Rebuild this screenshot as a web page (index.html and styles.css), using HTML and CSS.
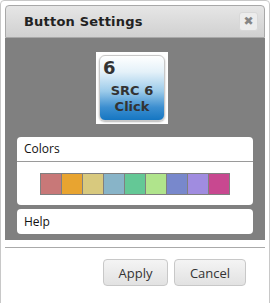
FILE: index.html
```html
<!DOCTYPE html>
<html lang="en">
<head>
  <meta charset="UTF-8" />
  <title>Button Settings</title>
  <link rel="stylesheet" href="styles.css">
</head>
<body>
  <div class="dialog">
    <div class="titlebar">
      <span class="title">Button Settings</span>
      <button class="close-btn" title="Close">&#x2716;</button>
    </div>

    <div class="content">
      <div class="preview">
        <div class="key">
          <span class="key-num">6</span>
          <span class="key-label">SRC 6<br>Click</span>
        </div>
      </div>

      <div class="panel">
        <div class="panel-head">Colors</div>
        <div class="swatches">
          <span class="swatch" style="background:#c87878"></span>
          <span class="swatch" style="background:#e8a430"></span>
          <span class="swatch" style="background:#d8c97e"></span>
          <span class="swatch" style="background:#88b4c8"></span>
          <span class="swatch" style="background:#64c896"></span>
          <span class="swatch" style="background:#b0e48c"></span>
          <span class="swatch" style="background:#7888cc"></span>
          <span class="swatch" style="background:#a08ce0"></span>
          <span class="swatch" style="background:#c84890"></span>
        </div>
      </div>

      <div class="panel">
        <div class="panel-head help">Help</div>
      </div>
    </div>

    <div class="footer">
      <button class="btn">Apply</button>
      <button class="btn">Cancel</button>
    </div>
  </div>
</body>
</html>
```

FILE: styles.css
```css
body {
  margin: 0;
  font-family: 'Open Sans', 'DejaVu Sans', sans-serif;
  background: #fff;
}
.dialog {
  width: 270px;
  height: 310px;
  box-sizing: border-box;
  border: 1px solid #c8c8c8;
  border-radius: 4px;
  padding: 4px;
  background: #fff;
}
.titlebar {
  height: 33px;
  box-sizing: border-box;
  display: flex;
  align-items: center;
  justify-content: space-between;
  padding: 0 6px 0 18px;
  border: 1px solid #a8a8a8;
  border-radius: 4px 4px 0 0;
  background: linear-gradient(#e6e6e6, #d0d0d0);
}
.title {
  font-family: 'DejaVu Sans', sans-serif;
  font-weight: bold;
  font-size: 13px;
  color: #222;
  letter-spacing: 0.2px;
}
.close-btn {
  width: 19px;
  height: 19px;
  padding: 0;
  border: 1px solid #d8d8d8;
  border-radius: 3px;
  background: #ececec;
  color: #858585;
  font-family: 'DejaVu Sans', sans-serif;
  font-size: 12px;
  line-height: 17px;
  cursor: pointer;
}
.content {
  background: #808080;
  padding: 14px 12px 6px;
}
.preview {
  width: 72px;
  height: 72px;
  margin: 0 0 13px 79px;
  background: #fff;
  padding: 3px;
  box-sizing: border-box;
}
.key {
  height: 100%;
  box-sizing: border-box;
  border: 1px solid #c8c8c8;
  border-radius: 6px;
  background: linear-gradient(#ffffff 0%, #e4f1f9 25%, #9ccbea 55%, #3d8fd0 80%, #1576c2 100%);
  box-shadow: 0 1px 2px rgba(0,0,0,0.3);
  font-family: 'DejaVu Sans', sans-serif;
  font-weight: bold;
  color: #333;
  padding: 2px 3px;
  display: flex;
  flex-direction: column;
}
.key-num {
  font-size: 18px;
  line-height: 20px;
}
.key-label {
  font-size: 13px;
  line-height: 16px;
  text-align: center;
  margin-top: 5px;
}
.panel {
  background: #fff;
  border-radius: 4px;
  margin-bottom: 4px;
}
.panel:last-child {
  margin-bottom: 0;
}
.panel-head {
  font-size: 12px;
  color: #111;
  height: 24px;
  line-height: 24px;
  padding: 0 7px;
  border-bottom: 1px solid #9a9a9a;
}
.panel-head.help {
  height: 25px;
  line-height: 25px;
  border-bottom: none;
}
.swatches {
  display: flex;
  justify-content: center;
  padding: 11px 0 10px;
}
.swatch {
  width: 20px;
  height: 20px;
  border: 1px solid #808080;
  margin-left: -1px;
}
.footer {
  border-top: 1px solid #aaa;
  margin-top: 7px;
  padding: 11px 19px 0 0;
  display: flex;
  justify-content: flex-end;
  gap: 6px;
}
.btn {
  height: 27px;
  padding: 0 9px;
  font-family: 'Open Sans', sans-serif;
  font-size: 13px;
  color: #333;
  border: 1px solid #c8c8c8;
  border-radius: 4px;
  background: linear-gradient(#f4f4f4, #e2e2e2);
  cursor: pointer;
}
.btn:first-child {
  width: 65px;
}
.btn:last-child {
  width: 72px;
}
```
